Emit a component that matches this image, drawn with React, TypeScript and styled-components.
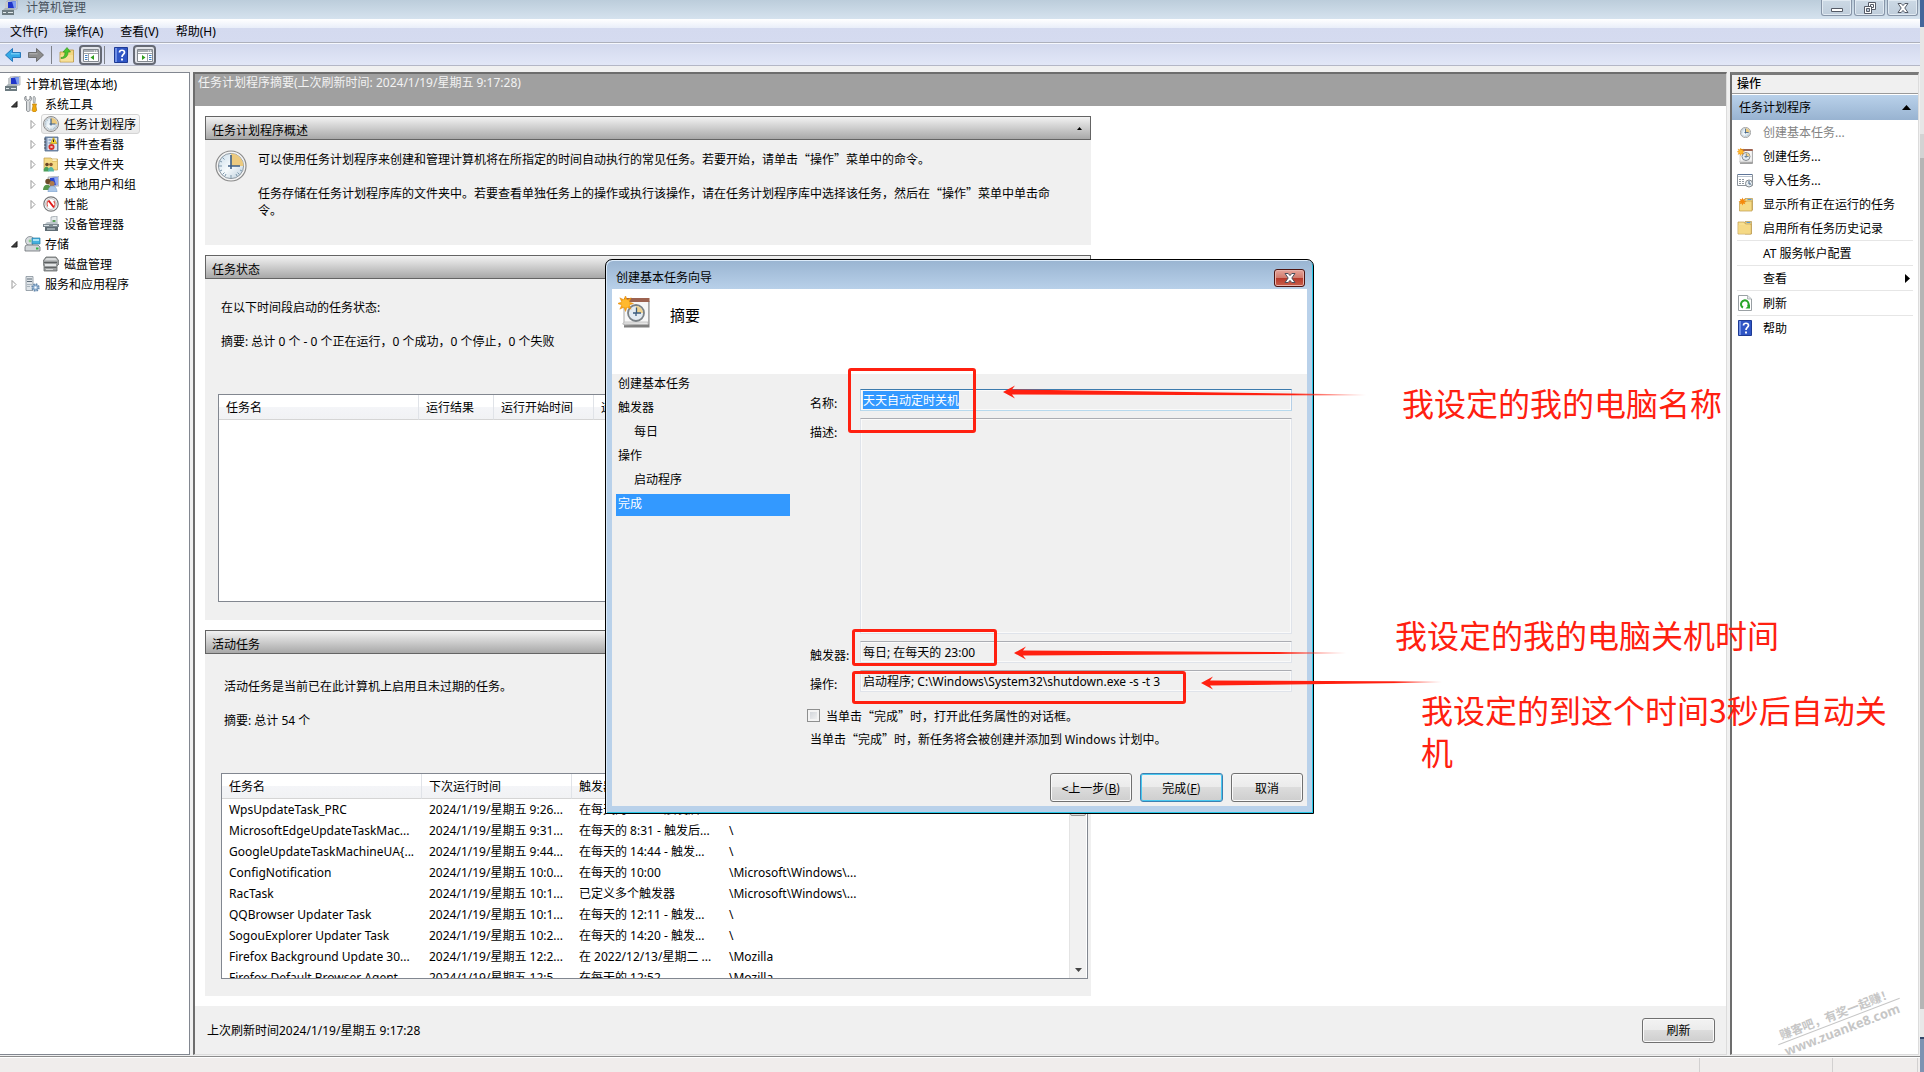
import React, { useEffect, useRef } from "react";
import styled, { createGlobalStyle, css } from "styled-components";

const latinFont = `"Noto Sans", "Noto Sans CJK SC", sans-serif`;
const cjkFont = `"Noto Sans CJK SC", "Noto Sans", sans-serif`;

const GlobalStyle = createGlobalStyle`
  * { box-sizing: border-box; }
  body {
    margin: 0;
    background: #f0f0f0;
    color: #000;
    font: 12px/17px ${latinFont};
  }
  button, input, textarea { font: inherit; color: inherit; margin: 0; border-radius: 0; }
  button { border: 0; padding: 0; background: none; white-space: nowrap; }
  ul, ol { margin: 0; padding: 0; list-style: none; }
  h1, h2, h3, p { margin: 0; font-size: 12px; font-weight: 400; }
  svg { display: block; flex: none; }
`;

/* ---------- icons ---------- */

const Clock = ({ size = 16 }: { size?: number }) => (
  <svg width={size} height={size} viewBox="0 0 32 32">
    <defs>
      <linearGradient id="face" x1="0" y1="0" x2="1" y2="1">
        <stop offset="0" stopColor="#c9dcea" />
        <stop offset=".5" stopColor="#f6fafc" />
        <stop offset="1" stopColor="#b9cddb" />
      </linearGradient>
    </defs>
    <circle cx="16" cy="16" r="15" fill="#f4f4f4" stroke="#8a8a8a" strokeWidth={size < 20 ? 2 : 1.2} />
    <circle cx="16" cy="16" r="12.6" fill="url(#face)" stroke="#8f9aa3" strokeWidth="1" />
    <path d="M16 16V3.6A12.4 12.4 0 0 1 28.4 16z" fill="#ecca7f" />
    <path d="M16 25v3M4 16h3M7.5 7.5l2 2M7.5 24.500l2-2M24.500 24.500l-2-2M10 26l1-2M22 26l-1-2M5 11l2 1M5 21l2-1M27 21l-2-1" stroke="#7d97ab" strokeWidth="1" />
    <path d="M16 5v14M13 16h12" stroke="#3c5f86" strokeWidth={size < 20 ? 2.4 : 1.6} />
  </svg>
);

const Computer = () => (
  <svg width="16" height="16" viewBox="0 0 16 16">
    <path d="M5 1l10-1v9L5 10z" fill="#dfe3e6" stroke="#8b9096" strokeWidth=".6" />
    <path d="M6 2l8-1v7L6 9z" fill="#1f35c9" />
    <path d="M10 1.500l4-.5v7l-2 .2z" fill="#7f9df0" />
    <path d="M3 2h3v8H3z" fill="#c5c9cc" />
    <path d="M0 10h12v5H0z" fill="#6c7a80" />
    <path d="M1 10l2-2h8l1 2z" fill="#a9b3b7" />
    <path d="M1 12h3v1H1zM6 12h5v1H6z" fill="#dfe7ea" />
  </svg>
);

const Tools = () => (
  <svg width="16" height="16" viewBox="0 0 16 16">
    <path d="M2 0v3l2 1.500L6 3V0c2 1 2 4 0 5.500V14c0 2-3.500 2-3.500 0V5.500C0 4 0 1 2 0z" fill="#d9dcde" stroke="#74797d" strokeWidth=".8" />
    <path d="M10 0l1.500 2L11 7H9.500L9 2z" fill="#cfd3d6" stroke="#85898c" strokeWidth=".6" />
    <path d="M8.500 8h4l-.6 2 .8 4.500L11 16H9.500L8 14.500 9 10z" fill="#f0a80c" stroke="#b87a08" strokeWidth=".7" />
  </svg>
);

const EventBook = () => (
  <svg width="16" height="16" viewBox="0 0 16 16">
    <path d="M2 1h13v14H2z" fill="#7e94b4" stroke="#51698c" strokeWidth=".8" />
    <path d="M4.500 2H14v12H4.500z" fill="#dce6f2" />
    <path d="M1 3h2M1 6h2M1 9h2M1 12h2" stroke="#4a4f57" strokeWidth="1" />
    <path d="M5.500 4h3M5.500 7h3M5.500 10h2" stroke="#6a83a8" />
    <path d="M10.500 1.500l3.500 6H7.500z" fill="#f6d22c" stroke="#b08e10" strokeWidth=".6" />
    <path d="M10.500 3.500v2.500" stroke="#222" />
    <circle cx="8.500" cy="11" r="3" fill="#d8322a" />
    <path d="M7.500 10l2 2m0-2l-2 2" stroke="#fff" strokeWidth=".8" />
  </svg>
);

const Folder = () => (
  <svg width="16" height="16" viewBox="0 0 16 16">
    <path d="M8 1.500h6.500V14H8z" fill="#f1d98a" stroke="#b6954a" strokeWidth=".7" />
    <path d="M9.500 2.500h4" stroke="#5a9ad2" />
    <path d="M1 2h6l1.500 2H14v10H1z" fill="#f7df8f" stroke="#bd9a48" strokeWidth=".7" />
    <path d="M1.500 5H13.500v8.500h-12z" fill="#f5d985" />
  </svg>
);

const SharedFolder = () => (
  <svg width="16" height="16" viewBox="0 0 16 16">
    <path d="M1 2h7l1 1h5.500v11H1z" fill="#f5da85" stroke="#bd9a48" strokeWidth=".7" />
    <path d="M9.500 4h4" stroke="#fff" />
    <path d="M9 5.500h5" stroke="#d9b85c" strokeWidth=".7" />
    <circle cx="4" cy="8.500" r="1.800" fill="#6b4524" />
    <circle cx="8" cy="8.500" r="1.800" fill="#8d5a30" />
    <path d="M.5 15.500c0-6 5-6 5.500-2l-.5 2z" fill="#4aa05a" />
    <path d="M5 15.500c0-6 6-6 6 0z" fill="#56b8a6" />
  </svg>
);

const Users = () => (
  <svg width="16" height="16" viewBox="0 0 16 16">
    <path d="M5 1l11-1v10L6 11z" fill="#d7dbe0" stroke="#8b9096" strokeWidth=".5" />
    <path d="M7 2l8-1v8l-8 1z" fill="#2b45cf" />
    <path d="M11 1.500l4-.5v8l-2 .2z" fill="#8ca6f2" />
    <circle cx="5" cy="5.500" r="2.700" fill="#6b4a2a" />
    <circle cx="9" cy="7.500" r="2.600" fill="#b07a48" />
    <path d="M0 14c0-7 8-7 8 0z" fill="#57964b" />
    <path d="M5 16c0-8 9-8 9 0z" fill="#a9c6e8" stroke="#6f92bd" strokeWidth=".5" />
  </svg>
);

const Performance = () => (
  <svg width="16" height="16" viewBox="0 0 16 16">
    <circle cx="8" cy="8" r="7.200" fill="#fff" stroke="#77797b" strokeWidth="1.200" />
    <circle cx="8" cy="8" r="5.400" fill="#fff" stroke="#a4a7a9" strokeWidth=".7" />
    <path d="M4.700 10.500C3.600 8 4 6 5.500 4.800M11.300 10.500c1-2 .8-4-.6-5.500" fill="none" stroke="#d65a50" strokeWidth="1.100" />
    <path d="M5.500 4.500l5.500 7" stroke="#e01818" strokeWidth="2" />
  </svg>
);

const Device = () => (
  <svg width="16" height="16" viewBox="0 0 16 16">
    <path d="M8 1l6-1v7H8z" fill="#e8ecee" stroke="#8e979d" strokeWidth=".7" />
    <path d="M9.500 4h3v2h-3z" fill="#58a05a" />
    <path d="M2 8l2-2h10l1 2z" fill="#bcc5ca" />
    <path d="M0 8h16v3H0z" fill="#7e8a91" />
    <path d="M2 11h13v4H2z" fill="#5f6c74" />
    <path d="M1 9.500h5M10 9.500h4M4 13h8" stroke="#d7e0e4" />
  </svg>
);

const Storage = () => (
  <svg width="17" height="16" viewBox="0 0 17 16">
    <circle cx="6" cy="5" r="4.500" fill="#d8dcdf" stroke="#7f868b" strokeWidth=".8" />
    <circle cx="6" cy="5" r="1.400" fill="#8ed08c" />
    <path d="M8 2h8v6H8z" fill="#45b1df" stroke="#2a7ba3" strokeWidth=".7" />
    <path d="M9 3h6v2H9z" fill="#a9e2f6" />
    <path d="M2 9h12l2 2v4H1v-4z" fill="#d2d6d9" stroke="#6a7074" strokeWidth=".8" />
    <path d="M12 12.500h2.500" stroke="#35b54a" strokeWidth="2" />
  </svg>
);

const Disk = () => (
  <svg width="16" height="16" viewBox="0 0 16 16">
    <path d="M3 1h10l3 4v3l-2 2v5H1v-5L0 8V5z" fill="#9b9e9f" stroke="#66696a" strokeWidth=".8" />
    <path d="M3.500 2h9l2 2.500h-13z" fill="#d8dadb" />
    <path d="M1 6.500h13" stroke="#5c5f60" />
    <path d="M2 8h11v2H2z" fill="#e4e6e7" />
    <path d="M1.500 11.500h12" stroke="#626566" />
    <path d="M3 13.500h7" stroke="#d5d7d7" />
  </svg>
);

const Services = () => (
  <svg width="16" height="16" viewBox="0 0 16 16">
    <path d="M2 .5h7v14H2z" fill="#dfe4e8" stroke="#87919a" strokeWidth=".8" />
    <path d="M3 3h5M3 5.500h5" stroke="#5f6d79" />
    <path d="M3 8.500h5M3 10.500h3" stroke="#a9b4bd" />
    <circle cx="11.500" cy="11.500" r="3.200" fill="#b9d0e6" stroke="#6689ad" strokeWidth="2" strokeDasharray="1.500 1" />
    <circle cx="11.500" cy="11.500" r="2.400" fill="#a4c2df" stroke="#6b8fb3" strokeWidth=".7" />
    <circle cx="11.500" cy="11.500" r="1" fill="#fff" />
  </svg>
);

const Arrow = ({ forward }: { forward?: boolean }) => (
  <svg width="16" height="16" viewBox="0 0 16 16">
    <path
      d={forward ? "M.5 5.500h8v-4L15.500 8l-7 6.500v-4h-8z" : "M15.500 5.500h-8v-4L.5 8l7 6.500v-4h8z"}
      fill={forward ? "#8c8c8c" : "#35a9e6"}
      stroke={forward ? "#666" : "#1c70b5"}
      strokeWidth=".9"
    />
    <path d={forward ? "M1.500 6.800h8" : "M6 6.800h8.500"} stroke={forward ? "#b5b5b5" : "#8fdcfb"} />
  </svg>
);

const FolderUp = () => (
  <svg width="16" height="16" viewBox="0 0 16 16">
    <path d="M1 5h7l1-2h5.500v12H1z" fill="#f3d680" stroke="#b9943f" strokeWidth=".8" />
    <path d="M1.500 8h12.500v6.500H1.500z" fill="#f7e09a" />
    <path d="M2 10.500c3 0 4-2 4-5.500H4l4-4.500L11.500 5H9c0 4-2 6.500-7 6.500z" fill="#4cc52d" stroke="#2f8e1a" strokeWidth=".6" />
  </svg>
);

const Pane = ({ right }: { right?: boolean }) => (
  <svg width="16" height="16" viewBox="0 0 16 16">
    <path d="M.5 2.500h15v12H.5z" fill="#fff" stroke="#84898f" />
    <path d="M1 3h14v2H1z" fill="#a8adb3" />
    <path d="M11 4h1M13 4h1" stroke="#fff" />
    <path d="M1 6.500h14" stroke="#9da2a8" />
    <path d={right ? "M10.500 7v7" : "M5.500 7v7"} stroke="#9da2a8" />
    <path d={right ? "M12 8.500h2.500M12 10.500h2.500M12 12.500h2.500" : "M2 8.500h2.500M2 10.500h2.500M2 12.500h2.500"} stroke="#3d7fc4" />
    <path d={right ? "M5 8v5l3.500-2.500z" : "M11 8v5l-3.500-2.500z"} fill="#2f9e1c" />
  </svg>
);

const Help = () => (
  <svg width="14" height="16" viewBox="0 0 14 16">
    <path d="M.5.5h13v15H.5z" fill="#2f55c5" stroke="#1e3a94" />
    <path d="M1 1h2v14H1z" fill="#6f8fe6" />
    <path d="M5.500 5.500c0-3 5-3 5 0 0 2-2.500 2-2.500 4.500" fill="none" stroke="#fff" strokeWidth="1.700" />
    <path d="M8 11.500v2" stroke="#fff" strokeWidth="1.900" />
  </svg>
);

const star = "M8 0l1.600 4.200L13.700 2.300 11.800 6.400 16 8l-4.200 1.600 1.900 4.100-4.100-1.900L8 16l-1.600-4.200-4.100 1.900 1.900-4.100L0 8l4.200-1.600L2.300 2.300l4.100 1.900z";

const TaskPage = ({ size = 16 }: { size?: number }) => (
  <svg width={size} height={size} viewBox="0 0 32 32">
    <path d="M6 5h25.500v26.500H6z" fill="#7f7f7f" />
    <path d="M6 4h24.500v24L6 29z" fill="#f7f7f7" stroke="#a9a9a9" />
    <path d="M6 2h25.500v4H6z" fill="#9c6250" />
    <path d="M4.500 28l2-2H30v2.500z" fill="#e9e9e9" stroke="#a9a9a9" strokeWidth=".6" />
    <circle cx="18" cy="17" r="8" fill="#e3ebf2" stroke="#7a8085" strokeWidth="1.800" />
    <path d="M18 17v-7a7 7 0 0 1 7 7z" fill="#efd28e" />
    <path d="M18.500 11.500V17H23M15 17h3v3" fill="none" stroke="#3a5b7d" strokeWidth="1.300" />
    <g transform="translate(-.5 -.5)">
      <path d={star} fill="#f7a413" stroke="#de8206" strokeWidth=".4" />
      <circle cx="8" cy="8" r="4" fill="#ffb92e" />
    </g>
  </svg>
);

const ImportTask = () => (
  <svg width="16" height="16" viewBox="0 0 16 16">
    <path d="M.5 2.500h15v11H.5z" fill="#fff" stroke="#8b929a" />
    <path d="M1 2.500h14" stroke="#5f7699" strokeWidth="1" />
    <path d="M1 4.500h14" stroke="#b9c3cd" strokeWidth="1" />
    <path d="M2 7.500h6M2 9.500h5M2 11.500h5" stroke="#8f989f" strokeDasharray="2 1" />
    <circle cx="12" cy="11.500" r="3.500" fill="#e6edf2" stroke="#83898e" />
    <path d="M12 9v3h2" fill="none" stroke="#44617f" />
  </svg>
);

const RunningFolder = () => (
  <svg width="16" height="16" viewBox="0 0 16 16">
    <path d="M8 2.500h7.500V14H8z" fill="#f1d98a" stroke="#b6954a" strokeWidth=".7" />
    <path d="M10.500 3.500h4" stroke="#5a9ad2" />
    <path d="M2.500 6h6l1-1H15v10H2.500z" fill="#f5da85" stroke="#bd9a48" strokeWidth=".7" />
    <g transform="translate(1.500 1.500) scale(.5)">
      <path d={star} fill="#f58a0c" />
    </g>
  </svg>
);

const Refresh = () => (
  <svg width="14" height="16" viewBox="0 0 14 16">
    <path d="M.5.5h9l4 3.500v11.500H.5z" fill="#fff" stroke="#9aa0a4" />
    <path d="M9.500.5V4h4" fill="#e4e8ea" stroke="#9aa0a4" strokeWidth=".7" />
    <path d="M5 12.500a3.800 3.800 0 1 1 4.800-1" fill="none" stroke="#27a528" strokeWidth="2" />
    <path d="M7.500 13.500h4.500V9z" fill="#27a528" />
  </svg>
);

const GlyphCross = ({ light }: { light?: boolean }) => (
  <svg width="12" height="10" viewBox="0 0 12 10">
    <path d="M1 .5h3.200L6 2.600 7.800.5H11L7.800 5 11 9.500H7.800L6 7.400 4.200 9.500H1L4.200 5z" fill="#fff" stroke={light ? "#4b4f5c" : "#545a66"} />
  </svg>
);

const GlyphMinimise = () => (
  <svg width="12" height="10" viewBox="0 0 12 10">
    <path d="M.5 5.500h11v3H.5z" fill="#fff" stroke="#545a66" />
  </svg>
);

const GlyphRestore = () => (
  <svg width="12" height="12" viewBox="0 0 12 12">
    <path d="M4.500.5h7v7h-7z" fill="#fff" stroke="#545a66" />
    <path d="M6.500 2.500h3v3h-3z" fill="none" stroke="#545a66" />
    <path d="M.5 4.500h7v7h-7z" fill="#fff" stroke="#545a66" />
    <path d="M2.500 6.500h3v3h-3z" fill="#bcc9d8" stroke="#545a66" />
  </svg>
);

const Expander = ({ open }: { open?: boolean }) => (
  <svg width="10" height="10" viewBox="0 0 10 10">
    {open ? (
      <path d="M8 2.500v5.500H2.500z" fill="#444" stroke="#1a1a1a" />
    ) : (
      <path d="M3 1.500l4 4-4 4z" fill="#fff" stroke="#9a9a9a" />
    )}
  </svg>
);

/* ---------- window frame ---------- */

const Screen = styled.div`
  position: relative;
  display: flex;
  min-height: 100vh;
  overflow: hidden;
`;

const Desktop = styled.div`
  flex: 0 0 4px;
  background: linear-gradient(#44669a 27px, #e6e6e6 27px, #e6e6e6 134px, #d3d3d3 134px, #d3d3d3 158px, #b5b5b5 158px);
  display: flex;
  flex-direction: column;
  justify-content: flex-end;
  &::after {
    content: "";
    height: 64px;
    background: linear-gradient(#e8e8e8 28px, #34486a 28px, #34486a 30px, #7e93b2 30px);
  }
`;

const Window = styled.div`
  flex: 1;
  min-width: 0;
  display: flex;
  flex-direction: column;
`;

const TitleBar = styled.header`
  height: 19px;
  display: flex;
  justify-content: space-between;
  background: linear-gradient(#bccddb, #d5e2ee);
  padding: 0 2px;
`;

const WindowTitle = styled.h1`
  display: flex;
  gap: 8px;
  align-items: flex-start;
  color: #47515c;
  line-height: 15px;
`;

const WindowControls = styled.div`
  display: flex;
  gap: 2px;
`;

const ControlButton = styled.button`
  width: 31px;
  height: 16px;
  display: grid;
  place-items: center;
  border: 1px solid #8795a8;
  border-top: 0;
  border-radius: 0 0 3px 3px;
  background: linear-gradient(#ccd9e5, #bfcddb);
  box-shadow: inset 0 0 0 1px #e1eaf2;
`;

const MenuBar = styled.nav`
  height: 24px;
  display: flex;
  gap: 17px;
  padding: 2px 10px 0;
  background: linear-gradient(#fff, #e9eef9 9px, #d4daef 9px, #d5dbf0);
  border-bottom: 1px solid #adb0bb;
`;

const ToolBar = styled.div`
  height: 23px;
  display: flex;
  align-items: center;
  padding: 2px 5px 0;
  background: linear-gradient(#f6f8fd 1px, #d3d9ee 1px, #e2e7f7);
  border-bottom: 1px solid #b4b7c6;
`;

const ToolButton = styled.button<{ $framed?: boolean; $gap?: number }>`
  height: 20px;
  margin-right: ${(p) => p.$gap ?? 7}px;
  display: grid;
  place-items: center;
  ${(p) =>
    p.$framed &&
    css`
      width: 23px;
      border: 2px solid #666a75;
      border-radius: 4px;
      background: #e2e4ea;
    `}
`;

const ToolDivider = styled.i<{ $gap: number }>`
  width: 1px;
  height: 18px;
  margin-right: ${(p) => p.$gap}px;
  background: #7f8289;
`;

const Panes = styled.div`
  flex: 1;
  display: grid;
  grid-template-columns: 190px minmax(0, 1fr) 189px;
  gap: 3px;
  padding: 6px 1px 1px 0;
  border-bottom: 1px solid #8b8b8b;
`;

const StatusBar = styled.footer`
  height: 16px;
  display: flex;
  justify-content: flex-end;
  background: #f0edec;
  border-top: 1px solid #fff;
`;

const StatusCell = styled.div<{ $width: number }>`
  width: ${(p) => p.$width}px;
  border-left: 1px solid #d2d0d0;
`;

/* ---------- tree ---------- */

const TreePane = styled.nav`
  background: #fff;
  border: 1px solid #828790;
  border-left: 0;
  padding-top: 1px;
`;

const TreeRow = styled.li<{ $level: number }>`
  height: 20px;
  display: flex;
  align-items: center;
  padding-left: ${(p) => [3, 9, 28][p.$level]}px;
`;

const ExpanderSlot = styled.span`
  width: 10px;
  margin-right: 3px;
`;

const TreeButton = styled.button<{ $selected?: boolean }>`
  height: 20px;
  display: flex;
  align-items: center;
  gap: 5px;
  padding: 0 3px 0 1px;
  border: 1px solid transparent;
  border-radius: 3px;
  ${(p) =>
    p.$selected &&
    css`
      border-color: #d5d5d5;
      background: linear-gradient(#fafafa, #e9e9e9);
    `}
`;

const IconSlot = styled.span`
  width: 16px;
  display: grid;
  place-items: center;
`;

/* ---------- centre pane ---------- */

const MainPane = styled.main`
  display: flex;
  flex-direction: column;
  background: #fff;
  border: 1px solid #dcdcdc;
  border-top: 2px solid #6d6d6d;
  border-left: 2px solid #6d6d6d;
`;

const PaneHeader = styled.header`
  height: 32px;
  padding: 0 3px;
  background: #a0a0a0;
  color: #f2f2f2;
`;

const Sections = styled.div`
  flex: 1;
  display: flex;
  flex-direction: column;
  gap: 10px;
  padding: 10px;
`;

const Section = styled.section<{ $grow?: boolean }>`
  display: flex;
  flex-direction: column;
  width: 100%;
  max-width: 886px;
  background: #f0f0f0;
  ${(p) => p.$grow && "flex: 1 0 auto;"}
`;

const SectionHeader = styled.header`
  height: 24px;
  display: flex;
  align-items: center;
  justify-content: space-between;
  padding: 4px 6px 0;
  border: 1px solid #646464;
  background: linear-gradient(#f2f2f2, #a8a8a8);
`;

const CollapseButton = styled.button`
  width: 9px;
  height: 9px;
  margin-bottom: 4px;
  display: grid;
  place-items: center;
`;

const Overview = styled.div`
  display: flex;
  gap: 11px;
  padding: 10px 10px 27px;
  font-family: ${cjkFont};
`;

const OverviewText = styled.div`
  display: flex;
  flex-direction: column;
  gap: 17px;
  max-width: 800px;
`;

const SectionBody = styled.div<{ $top: number; $inset: number; $tail: number }>`
  flex: 1;
  display: flex;
  flex-direction: column;
  padding: ${(p) => p.$top}px 3px ${(p) => p.$tail}px ${(p) => p.$inset}px;
`;

const Summary = styled.div`
  display: flex;
  flex-direction: column;
  gap: 17px;
  padding: 0 3px 44px;
`;

const ListBox = styled.div<{ $height: number }>`
  height: ${(p) => p.$height}px;
  display: flex;
  background: #fff;
  border: 1px solid #828790;
  overflow: hidden;
`;

const ListTable = styled.table`
  flex: 1;
  align-self: flex-start;
  table-layout: fixed;
  width: 100%;
  border-collapse: separate;
  border-spacing: 0;
  th,
  td {
    padding: 0 0 0 7px;
    text-align: left;
    font-weight: 400;
    white-space: nowrap;
    overflow: hidden;
  }
  th {
    height: 25px;
    border-right: 1px solid #e0e3e8;
    border-bottom: 1px solid #d5d5d5;
    background: linear-gradient(#fff 50%, #f4f5f8 50%, #f1f2f4);
  }
  td {
    height: 21px;
  }
`;

const ScrollBar = styled.div`
  width: 17px;
  margin-right: 1px;
  display: flex;
  flex-direction: column;
  justify-content: space-between;
  background: #f1f1f1;
  border-left: 1px solid #e4e4e4;
`;

const ScrollThumb = styled.div`
  height: 42px;
  border: 1px solid #979797;
  border-radius: 2px;
  background: #dcdcdc;
`;

const ScrollArrow = styled.button`
  height: 17px;
  display: grid;
  place-items: center;
`;

const PaneFooter = styled.footer`
  height: 48px;
  display: flex;
  align-items: center;
  justify-content: space-between;
  padding: 0 11px 0 12px;
  background: #f0f0f0;
`;

const PushButton = styled.button<{ $width: number; $height: number; $primary?: boolean }>`
  width: ${(p) => p.$width}px;
  height: ${(p) => p.$height}px;
  border: 1px solid ${(p) => (p.$primary ? "#3c7fb1" : "#707070")};
  border-radius: 3px;
  background: linear-gradient(#f3f3f3, #ebebeb 50%, #dcdcdc 50%, #cecece);
  box-shadow: inset 0 0 0 1px ${(p) => (p.$primary ? "#48c8f0" : "#fafafa")};
`;

/* ---------- actions pane ---------- */

const ActionsPane = styled.aside`
  display: flex;
  flex-direction: column;
  background: #fff;
  border: 1px solid #dcdcdc;
  border-top: 3px solid #7a7a7a;
  border-left: 2px solid #6d6d6d;
`;

const ActionsTitle = styled.h2`
  height: 19px;
  padding: 0 5px;
  background: #f0f0f0;
  border-bottom: 1px solid #9a9a9a;
  font-weight: 500;
`;

const ActionsGroup = styled.button`
  height: 25px;
  margin-top: 1px;
  display: flex;
  align-items: center;
  justify-content: space-between;
  padding: 0 7px;
  background: linear-gradient(#b9d1ea, #98b3d1);
`;

const ActionItem = styled.li<{ $ruled?: boolean }>`
  margin: 0 5px;
  ${(p) => p.$ruled && "border-top: 1px solid #e6e6e6;"}
`;

const ActionButton = styled.button`
  width: 100%;
  height: 24px;
  display: grid;
  grid-template-columns: 16px 1fr 8px;
  column-gap: 10px;
  align-items: center;
  text-align: left;
  &:disabled {
    color: #838383;
  }
`;

/* ---------- wizard ---------- */

const Dialog = styled.section`
  position: absolute;
  left: 605px;
  top: 259px;
  width: 709px;
  height: 555px;
  display: flex;
  flex-direction: column;
  padding: 0 6px 7px;
  border: 1px solid #000;
  border-radius: 7px 7px 0 0;
  background: linear-gradient(#99b4d1, #b9d1ea 30px);
  box-shadow: inset 1px 1px 0 #dcebfa, inset -1px -1px 0 #26c7e8;
`;

const DialogTitle = styled.header`
  height: 29px;
  display: flex;
  justify-content: space-between;
  padding: 9px 2px 0 4px;
`;

const CloseButton = styled.button`
  width: 31px;
  height: 18px;
  display: grid;
  place-items: center;
  border: 1px solid #4e1511;
  border-radius: 3px;
  background: linear-gradient(#e6a59b, #d0796b 50%, #b6382a 50%, #c9604c);
  box-shadow: inset 0 0 0 1px #e9b3ab;
`;

const DialogBanner = styled.div`
  height: 85px;
  display: flex;
  gap: 20px;
  padding: 7px 6px;
  background: #fff;
  h2 {
    padding-top: 8px;
    font-size: 15px;
    line-height: 22px;
  }
`;

const DialogBody = styled.div`
  flex: 1;
  display: grid;
  grid-template-columns: 174px 1fr;
  column-gap: 17px;
  padding: 0 3px 0 4px;
  background: #f0f0f0;
  font-family: ${cjkFont};
`;

const Step = styled.li<{ $indent?: boolean; $current?: boolean }>`
  height: ${(p) => (p.$current ? 22 : 24)}px;
  padding: 0 0 0 ${(p) => (p.$indent ? 18 : 2)}px;
  ${(p) => p.$current && "background: #3399ff; color: #fff;"}
`;

const Form = styled.form`
  display: flex;
  flex-direction: column;
  padding: 15px 12px 4px 0;
`;

const Field = styled.div`
  display: grid;
  grid-template-columns: 50px 1fr;
  margin: 0 0 7px 3px;
  label {
    padding-top: 5px;
  }
`;

const fieldBox = css`
  width: 100%;
  padding: 2px;
  border: 1px solid #dfe3ea;
  border-top-color: #abadb3;
  background: #f0f0f0;
  box-shadow: inset 0 0 0 1px #fafafa;
  outline: 0;
  font-family: ${latinFont};
  &::selection {
    background: #3399ff;
    color: #fff;
  }
`;

const TextField = styled.input<{ $active?: boolean }>`
  ${fieldBox}
  height: 22px;
  ${(p) => p.$active && "border-color: #3d7bad #b5cfe7 #b7d9ed;"}
`;

const TextArea = styled.textarea`
  ${fieldBox}
  height: 216px;
  resize: none;
  display: block;
`;

const CheckRow = styled.label`
  display: flex;
  align-items: center;
  gap: 6px;
  margin-top: 8px;
  line-height: 17px;
`;

const CheckBox = styled.input`
  appearance: none;
  width: 13px;
  height: 13px;
  border: 1px solid #8e8f8f;
  background: linear-gradient(135deg, #cbcfd5, #f6f6f6);
  box-shadow: inset 0 0 0 2px #f4f4f4;
`;

const Note = styled.p`
  margin: 6px 3px 0;
`;

const DialogActions = styled.div`
  display: flex;
  justify-content: flex-end;
  gap: 8px;
  margin-top: auto;
  margin-right: -11px;
`;

/* ---------- markup on top ---------- */

const Frame = styled.div<{ $x: number; $y: number; $w: number; $h: number }>`
  position: absolute;
  left: ${(p) => p.$x}px;
  top: ${(p) => p.$y}px;
  width: ${(p) => p.$w}px;
  height: ${(p) => p.$h}px;
  border: 3px solid #ff2010;
  border-radius: 3px;
`;

const Remark = styled.p<{ $x: number; $y: number }>`
  position: absolute;
  left: ${(p) => p.$x}px;
  top: ${(p) => p.$y}px;
  max-width: 480px;
  color: #ff2010;
  font: 32px/42px ${cjkFont};
`;

const Arrows = styled.svg`
  position: absolute;
  left: 990px;
  top: 370px;
  pointer-events: none;
`;

const Watermark = styled.div`
  position: absolute;
  right: 20px;
  bottom: 35px;
  width: 130px;
  transform: rotate(-21deg);
  text-align: center;
  color: #c6c6c6;
  font: 700 12px/16px ${cjkFont};
  span {
    display: block;
    border-bottom: 1px solid #c6c6c6;
  }
  b {
    font: 700 13px/16px ${latinFont};
  }
`;

/* ---------- data ---------- */

const tree = [
  { level: 1, label: "系统工具", icon: <Tools />, open: true },
  { level: 2, label: "任务计划程序", icon: <Clock />, open: false, selected: true },
  { level: 2, label: "事件查看器", icon: <EventBook />, open: false },
  { level: 2, label: "共享文件夹", icon: <SharedFolder />, open: false },
  { level: 2, label: "本地用户和组", icon: <Users />, open: false },
  { level: 2, label: "性能", icon: <Performance />, open: false },
  { level: 2, label: "设备管理器", icon: <Device /> },
  { level: 1, label: "存储", icon: <Storage />, open: true },
  { level: 2, label: "磁盘管理", icon: <Disk /> },
  { level: 1, label: "服务和应用程序", icon: <Services />, open: false },
];

const tasks = [
  ["WpsUpdateTask_PRC", "2024/1/19/星期五 9:26...", "在每天的 8:26 - 触发后...", "\\"],
  ["MicrosoftEdgeUpdateTaskMac...", "2024/1/19/星期五 9:31...", "在每天的 8:31 - 触发后...", "\\"],
  ["GoogleUpdateTaskMachineUA{...", "2024/1/19/星期五 9:44...", "在每天的 14:44 - 触发...", "\\"],
  ["ConfigNotification", "2024/1/19/星期五 10:0...", "在每天的 10:00", "\\Microsoft\\Windows\\..."],
  ["RacTask", "2024/1/19/星期五 10:1...", "已定义多个触发器", "\\Microsoft\\Windows\\..."],
  ["QQBrowser Updater Task", "2024/1/19/星期五 10:1...", "在每天的 12:11 - 触发...", "\\"],
  ["SogouExplorer Updater Task", "2024/1/19/星期五 10:2...", "在每天的 14:20 - 触发...", "\\"],
  ["Firefox Background Update 30...", "2024/1/19/星期五 12:2...", "在 2022/12/13/星期二 ...", "\\Mozilla"],
  ["Firefox Default Browser Agent", "2024/1/19/星期五 12:5...", "在每天的 12:52", "\\Mozilla"],
];

const actions = [
  { label: "创建基本任务...", icon: <Clock size={11} />, disabled: true },
  { label: "创建任务...", icon: <TaskPage /> },
  { label: "导入任务...", icon: <ImportTask /> },
  { label: "显示所有正在运行的任务", icon: <RunningFolder /> },
  { label: "启用所有任务历史记录", icon: <Folder /> },
  { label: "AT 服务帐户配置", ruled: true },
  { label: "查看", ruled: true, submenu: true },
  { label: "刷新", icon: <Refresh />, ruled: true },
  { label: "帮助", icon: <Help />, ruled: true },
];

const steps = [
  { label: "创建基本任务" },
  { label: "触发器" },
  { label: "每日", indent: true },
  { label: "操作" },
  { label: "启动程序", indent: true },
  { label: "完成", current: true },
];

function Wizard() {
  const nameRef = useRef<HTMLInputElement>(null);
  useEffect(() => {
    nameRef.current?.focus({ preventScroll: true });
    nameRef.current?.select();
  }, []);

  return (
    <Dialog role="dialog" aria-labelledby="wizard-title">
      <DialogTitle>
        <h2 id="wizard-title">创建基本任务向导</h2>
        <CloseButton aria-label="关闭">
          <GlyphCross light />
        </CloseButton>
      </DialogTitle>
      <DialogBanner>
        <TaskPage size={32} />
        <h2>摘要</h2>
      </DialogBanner>
      <DialogBody>
        <ol>
          {steps.map((s) => (
            <Step key={s.label} $indent={s.indent} $current={s.current}>
              {s.label}
            </Step>
          ))}
        </ol>
        <Form onSubmit={(e) => e.preventDefault()}>
          <Field>
            <label htmlFor="name">名称:</label>
            <TextField id="name" ref={nameRef} $active readOnly value="天天自动定时关机" />
          </Field>
          <Field>
            <label htmlFor="description">描述:</label>
            <TextArea id="description" readOnly value="" />
          </Field>
          <Field>
            <label htmlFor="trigger">触发器:</label>
            <TextField id="trigger" readOnly value="每日; 在每天的 23:00" />
          </Field>
          <Field>
            <label htmlFor="action">操作:</label>
            <TextField id="action" readOnly value="启动程序; C:\Windows\System32\shutdown.exe -s -t 3" />
          </Field>
          <CheckRow>
            <CheckBox type="checkbox" />
            当单击“完成”时，打开此任务属性的对话框。
          </CheckRow>
          <Note>当单击“完成”时，新任务将会被创建并添加到 Windows 计划中。</Note>
          <DialogActions>
            <PushButton type="button" $width={82} $height={29}>
              &lt;上一步(<u>B</u>)
            </PushButton>
            <PushButton type="submit" $width={83} $height={29} $primary>
              完成(<u>F</u>)
            </PushButton>
            <PushButton type="button" $width={72} $height={29}>
              取消
            </PushButton>
          </DialogActions>
        </Form>
      </DialogBody>
    </Dialog>
  );
}

const pointers = [
  { x: 13, y: 22, end: 376, endY: 25 },
  { x: 24, y: 283, end: 356, endY: 283 },
  { x: 211, y: 313, end: 452, endY: 312 },
];

function Markup() {
  return (
    <>
      <Frame $x={848} $y={368} $w={128} $h={65} />
      <Frame $x={852} $y={629} $w={145} $h={37} />
      <Frame $x={852} $y={671} $w={334} $h={33} />
      <Arrows width="460" height="330" viewBox="0 0 460 330">
        {pointers.map((p, i) => (
          <g key={p.y}>
            <linearGradient id={`fade${i}`} gradientUnits="userSpaceOnUse" x1={p.x} x2={p.end} y1="0" y2="0">
              <stop offset="0.8" stopColor="#ff2010" />
              <stop offset="1" stopColor="#ff2010" stopOpacity="0" />
            </linearGradient>
            <path
              d={`M${p.x} ${p.y}l12-6.500-3 4L${p.end} ${p.endY - 0.5}v1L${p.x + 9} ${p.y + 2.5}l3 4z`}
              fill={`url(#fade${i})`}
            />
          </g>
        ))}
      </Arrows>
      <Remark $x={1402} $y={381}>我设定的我的电脑名称</Remark>
      <Remark $x={1395} $y={613}>我设定的我的电脑关机时间</Remark>
      <Remark $x={1421} $y={688}>我设定的到这个时间3秒后自动关机</Remark>
      <Watermark>
        <span>赚客吧，有奖一起赚！</span>
        <b>www.zuanke8.com</b>
      </Watermark>
    </>
  );
}

export default function App() {
  return (
    <Screen lang="zh-CN">
      <GlobalStyle />
      <Window>
        <TitleBar>
          <WindowTitle>
            <Computer />
            计算机管理
          </WindowTitle>
          <WindowControls>
            <ControlButton aria-label="最小化"><GlyphMinimise /></ControlButton>
            <ControlButton aria-label="还原"><GlyphRestore /></ControlButton>
            <ControlButton aria-label="关闭窗口"><GlyphCross /></ControlButton>
          </WindowControls>
        </TitleBar>
        <MenuBar>
          {["文件(F)", "操作(A)", "查看(V)", "帮助(H)"].map((m) => (
            <button key={m}>{m}</button>
          ))}
        </MenuBar>
        <ToolBar>
          <ToolButton aria-label="后退"><Arrow /></ToolButton>
          <ToolButton aria-label="前进"><Arrow forward /></ToolButton>
          <ToolDivider $gap={7} />
          <ToolButton aria-label="上一级" $gap={4}><FolderUp /></ToolButton>
          <ToolButton aria-label="显示控制台树" $framed $gap={2}><Pane /></ToolButton>
          <ToolDivider $gap={9} />
          <ToolButton aria-label="帮助主题" $gap={5}><Help /></ToolButton>
          <ToolButton aria-label="显示操作窗格" $framed><Pane right /></ToolButton>
        </ToolBar>
        <Panes>
          <TreePane aria-label="控制台树">
            <ul>
              <TreeRow $level={0}>
                <TreeButton>
                  <IconSlot><Computer /></IconSlot>
                  计算机管理(本地)
                </TreeButton>
              </TreeRow>
              {tree.map((n) => (
                <TreeRow key={n.label} $level={n.level}>
                  <ExpanderSlot>{n.open !== undefined && <Expander open={n.open} />}</ExpanderSlot>
                  <TreeButton $selected={n.selected}>
                    <IconSlot>{n.icon}</IconSlot>
                    {n.label}
                  </TreeButton>
                </TreeRow>
              ))}
            </ul>
          </TreePane>

          <MainPane>
            <PaneHeader>任务计划程序摘要(上次刷新时间: 2024/1/19/星期五 9:17:28)</PaneHeader>
            <Sections>
              <Section>
                <SectionHeader>
                  <h3>任务计划程序概述</h3>
                  <CollapseButton aria-label="折叠">
                    <svg width="5" height="3" viewBox="0 0 5 3"><path d="M0 3h5L2.500 0z" /></svg>
                  </CollapseButton>
                </SectionHeader>
                <Overview>
                  <Clock size={32} />
                  <OverviewText>
                    <p>可以使用任务计划程序来创建和管理计算机将在所指定的时间自动执行的常见任务。若要开始，请单击“操作”菜单中的命令。</p>
                    <p>任务存储在任务计划程序库的文件夹中。若要查看单独任务上的操作或执行该操作，请在任务计划程序库中选择该任务，然后在“操作”菜单中单击命令。</p>
                  </OverviewText>
                </Overview>
              </Section>

              <Section>
                <SectionHeader><h3>任务状态</h3></SectionHeader>
                <SectionBody $top={20} $inset={13} $tail={18}>
                  <Summary>
                    <p>在以下时间段启动的任务状态:</p>
                    <p>摘要: 总计 0 个 - 0 个正在运行，0 个成功，0 个停止，0 个失败</p>
                  </Summary>
                  <ListBox $height={208}>
                    <ListTable>
                      <colgroup>
                        <col width="200" />
                        <col width="75" />
                        <col width="100" />
                        <col width="100" />
                        <col />
                      </colgroup>
                      <thead>
                        <tr>
                          <th>任务名</th>
                          <th>运行结果</th>
                          <th>运行开始时间</th>
                          <th>运行结束时间</th>
                          <th></th>
                        </tr>
                      </thead>
                    </ListTable>
                  </ListBox>
                </SectionBody>
              </Section>

              <Section $grow>
                <SectionHeader><h3>活动任务</h3></SectionHeader>
                <SectionBody $top={24} $inset={16} $tail={17}>
                  <Summary>
                    <p>活动任务是当前已在此计算机上启用且未过期的任务。</p>
                    <p>摘要: 总计 54 个</p>
                  </Summary>
                  <ListBox $height={206}>
                    <ListTable>
                      <colgroup>
                        <col width="200" />
                        <col width="150" />
                        <col width="150" />
                        <col />
                      </colgroup>
                      <thead>
                        <tr>
                          <th>任务名</th>
                          <th>下次运行时间</th>
                          <th>触发器</th>
                          <th>位置</th>
                        </tr>
                      </thead>
                      <tbody>
                        {tasks.map((row) => (
                          <tr key={row[0]}>
                            {row.map((cell, i) => (
                              <td key={i}>{cell}</td>
                            ))}
                          </tr>
                        ))}
                      </tbody>
                    </ListTable>
                    <ScrollBar>
                      <ScrollThumb />
                      <ScrollArrow aria-label="向下滚动">
                        <svg width="7" height="4" viewBox="0 0 7 4"><path d="M0 0h7L3.500 4z" fill="#444" /></svg>
                      </ScrollArrow>
                    </ScrollBar>
                  </ListBox>
                </SectionBody>
              </Section>
            </Sections>
            <PaneFooter>
              <span>上次刷新时间2024/1/19/星期五 9:17:28</span>
              <PushButton $width={73} $height={25}>刷新</PushButton>
            </PaneFooter>
          </MainPane>

          <ActionsPane>
            <ActionsTitle>操作</ActionsTitle>
            <ActionsGroup>
              任务计划程序
              <svg width="9" height="5" viewBox="0 0 9 5"><path d="M0 5h9L4.500 0z" /></svg>
            </ActionsGroup>
            <ul>
              {actions.map((a) => (
                <ActionItem key={a.label} $ruled={a.ruled}>
                  <ActionButton disabled={a.disabled}>
                    <IconSlot>{a.icon}</IconSlot>
                    {a.label}
                    {a.submenu && <svg width="5" height="9" viewBox="0 0 5 9"><path d="M0 0v9l5-4.500z" /></svg>}
                  </ActionButton>
                </ActionItem>
              ))}
            </ul>
          </ActionsPane>
        </Panes>
        <StatusBar>
          <StatusCell $width={133} />
          <StatusCell $width={85} />
          <StatusCell $width={3} />
        </StatusBar>
      </Window>
      <Desktop />
      <Wizard />
      <Markup />
    </Screen>
  );
}
